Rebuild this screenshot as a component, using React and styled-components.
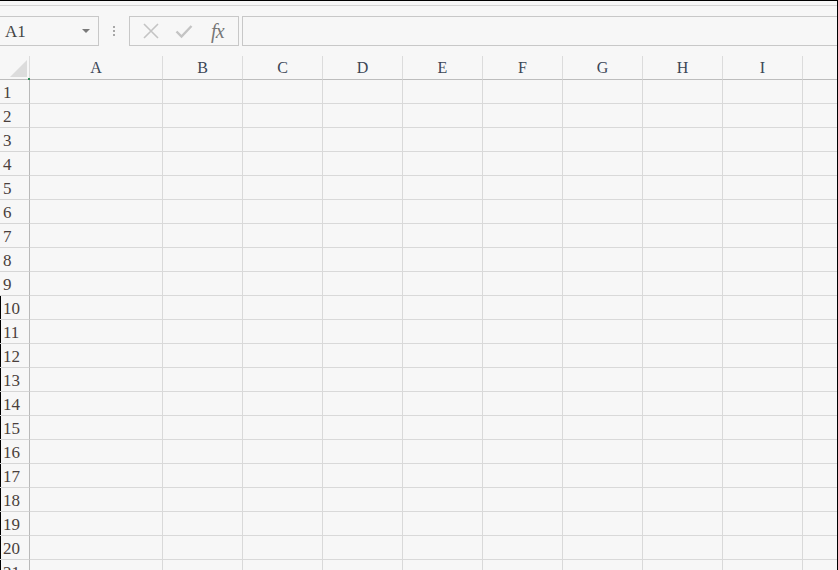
import React from "react";
import styled, { createGlobalStyle } from "styled-components";

const GlobalStyle = createGlobalStyle`
  html, body {
    margin: 0;
    padding: 0;
    background: #f7f7f7;
  }
  * {
    box-sizing: border-box;
  }
`;

const Frame = styled.div`
  width: 838px;
  height: 570px;
  overflow: hidden;
  background: #f7f7f7;
  border-top: 1px solid #000;
  border-right: 1px solid #000;
  display: flex;
  flex-direction: column;
  font-family: "Liberation Serif", "Times New Roman", serif;
`;

const TopStrip = styled.div`
  height: 5px;
  flex: none;
  border-bottom: 1px solid #d4d4d4;
`;

const FormulaBar = styled.div`
  margin-top: 10px;
  height: 30px;
  flex: none;
  display: flex;
  align-items: stretch;
`;

const NameBox = styled.div`
  width: 100px;
  margin-left: -1px;
  border: 1px solid #c8c8c8;
  display: flex;
  align-items: center;
  justify-content: space-between;
  padding: 2px 8px 0 5px;
  font-size: 17px;
  color: #444;
`;

const Caret = styled.span`
  width: 0;
  height: 0;
  margin-bottom: 2px;
  border-left: 4px solid transparent;
  border-right: 4px solid transparent;
  border-top: 4px solid #7a7a7a;
`;

const Grip = styled.div`
  width: 30px;
  display: flex;
  flex-direction: column;
  align-items: center;
  justify-content: center;
  gap: 2px;

  span {
    width: 2px;
    height: 2px;
    background: #a8a8a8;
  }
`;

const ButtonGroup = styled.div`
  width: 110px;
  border: 1px solid #c8c8c8;
  display: flex;
  align-items: center;
  justify-content: space-around;
  padding: 0 4px;
`;

const IconButton = styled.span`
  width: 24px;
  height: 24px;
  display: flex;
  align-items: center;
  justify-content: center;
  color: #c4c4c4;
`;

const Fx = styled.span`
  font-family: "Liberation Serif", "Times New Roman", serif;
  font-style: italic;
  font-size: 20px;
  color: #777;
  letter-spacing: -1px;
`;

const FormulaInput = styled.div`
  flex: 1;
  margin-left: 3px;
  margin-right: -2px;
  border: 1px solid #c8c8c8;
`;

const Sheet = styled.div`
  margin-top: 10px;
  display: grid;
  grid-template-columns: 30px 133px repeat(9, 80px);
  grid-auto-rows: 24px;
`;

const Corner = styled.div`
  position: relative;
  border-right: 1px solid #dcdcdc;
  border-bottom: 1px solid #bdbdbd;

  &::before {
    content: "";
    position: absolute;
    right: 2px;
    bottom: 2px;
    width: 0;
    height: 0;
    border-left: 17px solid transparent;
    border-bottom: 17px solid #dcdcdc;
  }

  &::after {
    content: "";
    position: absolute;
    right: -1px;
    bottom: -1px;
    width: 2px;
    height: 2px;
    background: #2e8b57;
  }
`;

const ColHeader = styled.div`
  border-right: 1px solid #dcdcdc;
  border-bottom: 1px solid #bdbdbd;
  display: flex;
  align-items: center;
  justify-content: center;
  font-size: 16px;
  color: #3b4656;
  padding-top: 1px;
`;

const RowHeader = styled.div`
  border-right: 1px solid #b9b9b9;
  border-bottom: 1px solid #d6d6d6;
  display: flex;
  align-items: center;
  padding: 3px 0 0 3px;
  font-size: 17px;
  color: #4a3f3c;
  box-shadow: ${(p) => (p.$edge ? "inset 1px 0 0 #000" : "none")};
`;

const Cell = styled.div`
  border-right: 1px solid #d9d9d9;
  border-bottom: 1px solid #d9d9d9;
`;

const columns = ["A", "B", "C", "D", "E", "F", "G", "H", "I", ""];
const rows = Array.from({ length: 21 }, (_, i) => i + 1);

const CrossIcon = () => (
  <svg width="18" height="18" viewBox="0 0 18 18">
    <path d="M2 2 L16 16 M16 2 L2 16" stroke="currentColor" strokeWidth="1.6" fill="none" />
  </svg>
);

const CheckIcon = () => (
  <svg width="18" height="18" viewBox="0 0 18 18">
    <path d="M1.5 9.5 L6.5 14.5 L16.5 4" stroke="currentColor" strokeWidth="2.4" fill="none" />
  </svg>
);

export default function App() {
  return (
    <>
      <GlobalStyle />
      <Frame>
        <TopStrip />
        <FormulaBar>
          <NameBox>
            A1
            <Caret />
          </NameBox>
          <Grip>
            <span />
            <span />
            <span />
          </Grip>
          <ButtonGroup>
            <IconButton>
              <CrossIcon />
            </IconButton>
            <IconButton>
              <CheckIcon />
            </IconButton>
            <IconButton>
              <Fx>fx</Fx>
            </IconButton>
          </ButtonGroup>
          <FormulaInput />
        </FormulaBar>
        <Sheet>
          <Corner />
          {columns.map((c, i) => (
            <ColHeader key={"h" + i}>{c}</ColHeader>
          ))}
          {rows.map((r) => (
            <React.Fragment key={r}>
              <RowHeader $edge={r >= 10}>{r}</RowHeader>
              {columns.map((c, i) => (
                <Cell key={r + "-" + i} />
              ))}
            </React.Fragment>
          ))}
        </Sheet>
      </Frame>
    </>
  );
}
